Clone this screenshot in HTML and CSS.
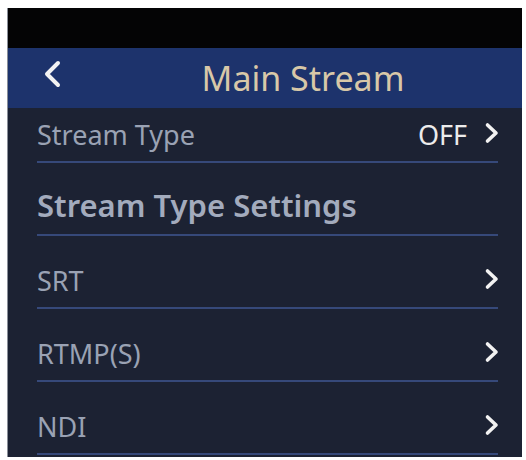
FILE: index.html
```html
<!DOCTYPE html>
<html lang="en">
<head>
    <meta charset="UTF-8">
    <meta name="viewport" content="width=device-width, initial-scale=1.0">
    <title>Main Stream</title>
    <link rel="stylesheet" href="styles.css">
</head>
<body>
    <div class="screen">
        <div class="statusbar"></div>

        <div class="header">
            <svg class="back" width="20" height="30" viewBox="0 0 20 30">
                <polyline points="16,4 5,15 16,26" fill="none" stroke="#f2f2f2" stroke-width="4" stroke-linecap="round" stroke-linejoin="round"/>
            </svg>
            <h1 class="title">Main Stream</h1>
        </div>

        <div class="list">
            <div class="row first">
                <span class="label">Stream Type</span>
                <span class="value">OFF</span>
                <svg class="arrow" width="16" height="22" viewBox="0 0 16 22">
                    <polyline points="3.5,3 12,11 3.5,19" fill="none" stroke="#f2f2f2" stroke-width="3.6" stroke-linecap="round" stroke-linejoin="round"/>
                </svg>
            </div>
            <div class="row section">
                <span class="label">Stream Type Settings</span>
            </div>
            <div class="row">
                <span class="label">SRT</span>
                <svg class="arrow" width="16" height="22" viewBox="0 0 16 22">
                    <polyline points="3.5,3 12,11 3.5,19" fill="none" stroke="#f2f2f2" stroke-width="3.6" stroke-linecap="round" stroke-linejoin="round"/>
                </svg>
            </div>
            <div class="row">
                <span class="label">RTMP(S)</span>
                <svg class="arrow" width="16" height="22" viewBox="0 0 16 22">
                    <polyline points="3.5,3 12,11 3.5,19" fill="none" stroke="#f2f2f2" stroke-width="3.6" stroke-linecap="round" stroke-linejoin="round"/>
                </svg>
            </div>
            <div class="row">
                <span class="label">NDI</span>
                <svg class="arrow" width="16" height="22" viewBox="0 0 16 22">
                    <polyline points="3.5,3 12,11 3.5,19" fill="none" stroke="#f2f2f2" stroke-width="3.6" stroke-linecap="round" stroke-linejoin="round"/>
                </svg>
            </div>
        </div>
    </div>
</body>
</html>
```

FILE: styles.css
```css
body {
    margin: 0;
    padding: 0;
    background-color: #ffffff;
    font-family: "Noto Sans", "Open Sans", sans-serif;
}

.screen {
    margin: 8px 5px 0 7px;
    width: 514px;
    height: 449px;
    background-color: #1c2233;
    border-left: 1px solid #8a8f99;
    overflow: hidden;
    display: flex;
    flex-direction: column;
}

.statusbar {
    height: 40px;
    background-color: #040405;
}

.header {
    height: 60px;
    background-color: #1d336c;
    display: flex;
    align-items: center;
    position: relative;
}

.back {
    position: absolute;
    left: 34px;
    top: 11px;
}

.title {
    margin: 0;
    width: 100%;
    text-align: center;
    padding-left: 76px;
    box-sizing: border-box;
    font-size: 34px;
    font-weight: 400;
    color: #d8c8a8;
    line-height: 58px;
}

.list {
    padding: 0 24px 0 29px;
}

.row {
    height: 73px;
    border-bottom: 2px solid #36497a;
    display: flex;
    align-items: flex-end;
    padding-bottom: 9px;
    box-sizing: border-box;
}

.row.first {
    height: 55px;
}

.label {
    flex: 1;
    font-size: 27px;
    color: #9aa2b4;
    line-height: 35px;
}

.section .label {
    font-size: 31px;
    font-weight: 600;
    color: #a3abbd;
    line-height: 40px;
}

.value {
    font-size: 27px;
    color: #ececec;
    line-height: 35px;
    margin-right: 17px;
}

.arrow {
    margin-bottom: 8px;
    margin-right: -2px;
}
```
